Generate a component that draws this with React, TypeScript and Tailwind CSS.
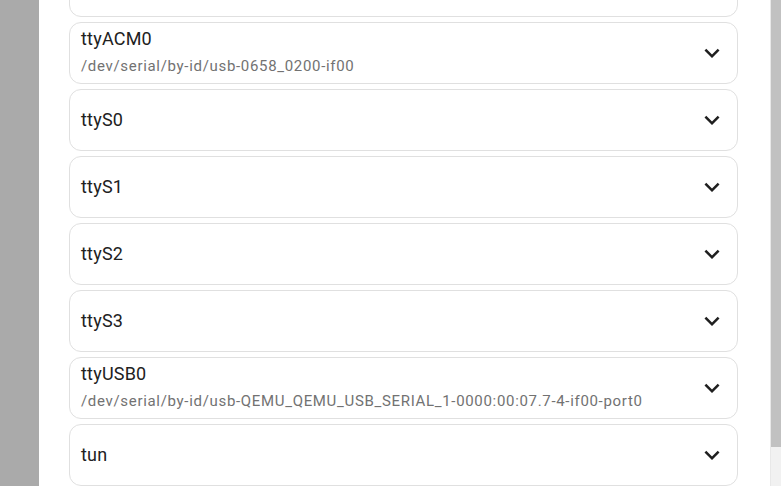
import React from "react";

const items: { name: string; sub?: string }[] = [
  { name: "" },
  { name: "ttyACM0", sub: "/dev/serial/by-id/usb-0658_0200-if00" },
  { name: "ttyS0" },
  { name: "ttyS1" },
  { name: "ttyS2" },
  { name: "ttyS3" },
  { name: "ttyUSB0", sub: "/dev/serial/by-id/usb-QEMU_QEMU_USB_SERIAL_1-0000:00:07.7-4-if00-port0" },
  { name: "tun" },
];

function Chevron() {
  return (
    <svg width="30" height="30" viewBox="0 0 24 24" className="shrink-0 text-[#1f1f1f]">
      <path fill="currentColor" d="M16.59 8.59L12 13.17 7.41 8.59 6 10l6 6 6-6z" />
    </svg>
  );
}

export default function App() {
  return (
    <div className="flex h-[486px] w-[781px] overflow-hidden bg-white" style={{ fontFamily: "Roboto, 'Noto Sans', sans-serif" }}>
      <div className="w-[39px] shrink-0 bg-[#aaaaaa]" />
      <div className="flex-1 bg-white pl-[30px] pr-[32px]">
        <div className="mt-[-45px] flex flex-col gap-[5px]">
          {items.map((it, i) => (
            <div
              key={i}
              className="flex h-[62px] items-center rounded-[12px] border border-[#e0e0e0] bg-white pl-[11px] pr-[10px]"
            >
              <div className={"flex min-w-0 flex-1 flex-col justify-center " + (it.sub ? "pb-[3px]" : "")}>
                <div className="text-[18px] leading-[24px] tracking-[0.2px] text-[#212121]">{it.name}</div>
                {it.sub && (
                  <div className="mt-[5px] text-[15px] leading-[20px] tracking-[0.68px] text-[#727272]">{it.sub}</div>
                )}
              </div>
              {it.name && <Chevron />}
            </div>
          ))}
        </div>
      </div>
      <div className="flex w-[11px] shrink-0 flex-col border-l border-[#e8e8e8] bg-[#f1f1f1]">
        <div className="h-[447px] bg-[#c1c1c1]" />
      </div>
    </div>
  );
}
